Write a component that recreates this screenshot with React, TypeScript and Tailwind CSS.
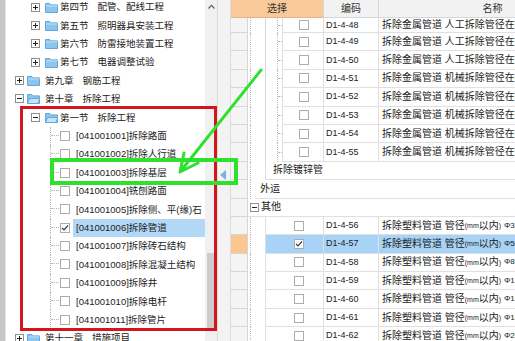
import React from "react";

type Node = { k: "n1" | "n2" | "leaf"; box?: "plus" | "minus"; a: string; b?: string; on?: boolean };

const tree: Node[] = [
  { k: "n2", box: "plus", a: "第四节", b: "配管、配线工程" },
  { k: "n2", box: "plus", a: "第五节", b: "照明器具安装工程" },
  { k: "n2", box: "plus", a: "第六节", b: "防雷接地装置工程" },
  { k: "n2", box: "plus", a: "第七节", b: "电器调整试验" },
  { k: "n1", box: "plus", a: "第九章", b: "钢筋工程" },
  { k: "n1", box: "minus", a: "第十章", b: "拆除工程" },
  { k: "n2", box: "minus", a: "第一节", b: "拆除工程" },
  { k: "leaf", a: "[041001001]拆除路面" },
  { k: "leaf", a: "[041001002]拆除人行道" },
  { k: "leaf", a: "[041001003]拆除基层" },
  { k: "leaf", a: "[041001004]铣刨路面" },
  { k: "leaf", a: "[041001005]拆除侧、平(缘)石" },
  { k: "leaf", a: "[041001006]拆除管道", on: true },
  { k: "leaf", a: "[041001007]拆除砖石结构" },
  { k: "leaf", a: "[041001008]拆除混凝土结构" },
  { k: "leaf", a: "[041001009]拆除井" },
  { k: "leaf", a: "[041001010]拆除电杆" },
  { k: "leaf", a: "[041001011]拆除管片" },
  { k: "n1", box: "plus", a: "第十一章", b: "措施项目" },
];

const metal = [
  { code: "D1-4-48", kind: "人工" },
  { code: "D1-4-49", kind: "人工" },
  { code: "D1-4-50", kind: "人工" },
  { code: "D1-4-51", kind: "机械" },
  { code: "D1-4-52", kind: "机械" },
  { code: "D1-4-53", kind: "机械" },
  { code: "D1-4-54", kind: "机械" },
  { code: "D1-4-55", kind: "机械" },
];

const plastic = [
  { code: "D1-4-56", d: "32" },
  { code: "D1-4-57", d: "50", on: true },
  { code: "D1-4-58", d: "80" },
  { code: "D1-4-59", d: "100" },
  { code: "D1-4-60", d: "150" },
  { code: "D1-4-61", d: "160" },
  { code: "D1-4-62", d: "200" },
];

function PlusBox({ minus }: { minus?: boolean }) {
  return (
    <svg width="9" height="9" viewBox="0 0 9 9" className="shrink-0">
      <rect x="0.5" y="0.5" width="8" height="8" fill="#fff" stroke="#8e8f8f" />
      <path d="M2 4.5h5" stroke="#1f1f1f" />
      {!minus && <path d="M4.5 2v5" stroke="#1f1f1f" />}
    </svg>
  );
}

function Folder({ open }: { open?: boolean }) {
  return (
    <svg width="13" height="11" viewBox="0 0 13 11" className="shrink-0">
      <path d="M0.5 1.5h4.2l1.2 1.4h6.6v7.6H0.5z" fill="#8cc6f0" stroke="#64a6dc" />
      {open ? (
        <path d="M0.5 10.5l2-5h10.3l-1.8 5z" fill="#c8e4f9" stroke="#64a6dc" />
      ) : (
        <path d="M1 4h11.5" stroke="#bfe0f8" />
      )}
    </svg>
  );
}

function Check({ on }: { on?: boolean }) {
  return (
    <span className="w-[10px] h-[10px] shrink-0 border border-[#acacac] bg-white flex items-center justify-center">
      {on && (
        <svg width="8" height="8" viewBox="0 0 8 8">
          <path d="M1 4l2 2 4-4.5" fill="none" stroke="#3c3c3c" strokeWidth="1.2" />
        </svg>
      )}
    </span>
  );
}

function TreeRow({ n }: { n: Node }) {
  if (n.k === "leaf") {
    return (
      <div className="flex items-center h-[18.4px] pl-[44px]">
        <div className="w-[9px] h-full border-l border-dotted border-[#b5b5b5] flex flex-col shrink-0">
          <div className="h-1/2 border-b border-dotted border-[#b5b5b5]" />
        </div>
        <div className="ml-[1px]">
          <Check on={n.on} />
        </div>
        <div className={`ml-[3px] h-full flex-1 flex items-center pl-[3px] whitespace-nowrap ${n.on ? "bg-[#b3d8f6]" : ""}`}>
          {n.a}
        </div>
      </div>
    );
  }
  const lvl1 = n.k === "n1";
  return (
    <div className={`flex items-center h-[18.4px] whitespace-nowrap ${lvl1 ? "pl-[9px]" : "pl-[25px]"}`}>
      <PlusBox minus={n.box === "minus"} />
      <div className={lvl1 ? "ml-[3px]" : "ml-[5px]"}>
        <Folder open={n.box === "minus"} />
      </div>
      <span className={lvl1 ? "ml-[5px]" : "ml-[2px]"}>{n.a}</span>
      <span className="ml-[9px]">{n.b}</span>
    </div>
  );
}

function Ind({ sel }: { sel?: boolean }) {
  return <div className={`w-[17px] shrink-0 border-r border-b border-[#d6d6d6] ${sel ? "bg-[#fbc78e]" : "bg-[#f4f4f4]"}`} />;
}

function CodeCell({ code }: { code: string }) {
  return (
    <div className="w-[55px] shrink-0 border-l border-b border-[#e0e0e0] flex items-center pl-[2px] text-[9px] text-[#222]">
      {code}
    </div>
  );
}

function NameCell({ children }: { children: React.ReactNode }) {
  return (
    <div className="w-[228px] shrink-0 border-l border-b border-[#e0e0e0] flex items-center pl-[3px] whitespace-nowrap">
      {children}
    </div>
  );
}

export default function App() {
  return (
    <div className="relative w-[515px] h-[341px] overflow-hidden bg-white text-[#1b1b1b] font-['Liberation_Sans','Noto_Sans_CJK_SC',sans-serif]">
      <div className="flex h-full">
        {/* left tree */}
        <div className="w-[6px] shrink-0 bg-[#c6c6c6] border-r border-[#e4e4e4]" />
        <div className="w-[199px] shrink-0 overflow-hidden text-[9.5px] leading-none">
          <div className="mt-[-2.2px]">
            {tree.map((n, i) => (
              <TreeRow key={i} n={n} />
            ))}
          </div>
        </div>
        <div className="w-[12px] shrink-0 bg-[#f0f0f0] flex flex-col">
          <div className="h-[12px] flex items-center justify-center">
            <svg width="7" height="5" viewBox="0 0 7 5">
              <path d="M0.5 4.5l3-3.2 3 3.2" fill="none" stroke="#606060" strokeWidth="1.2" />
            </svg>
          </div>
          <div className="mt-[241px] h-[77px] w-[8px] mx-auto bg-[#cdcdcd]" />
        </div>

        {/* splitter */}
        <div className="w-[14px] shrink-0 bg-[#f3f3f3] border-l border-[#cdcdcd] border-r border-[#dcdcdc] flex flex-col pl-[2px] pt-[170px]">
          <svg width="6" height="10" viewBox="0 0 6 10">
            <path d="M6 0v10L0 5z" fill="#7cb0e2" />
          </svg>
        </div>

        {/* right grid */}
        <div className="w-[284px] shrink-0 overflow-hidden flex flex-col text-[10px] leading-none">
          <div className="flex h-[18px] shrink-0 text-[#333]">
            <div className="w-[92px] shrink-0 bg-[#f9c999] flex items-center justify-center border-b border-[#e0b78a]">选择</div>
            <div className="w-[55px] shrink-0 bg-[#f2f2f2] border-l border-b border-[#d6d6d6] flex items-center justify-center">编码</div>
            <div className="w-[228px] shrink-0 bg-[#f2f2f2] border-l border-b border-[#d6d6d6] flex items-center justify-center">名称</div>
          </div>

          {metal.map((r, i) => (
            <div key={r.code} className={`flex shrink-0 ${i === 0 ? "h-[15px]" : "h-[18.4px]"}`}>
              <Ind />
              <div className="w-[34px] shrink-0 flex">
                <div className="w-[2px]" />
                <div className="w-[15px] border-l border-dotted border-[#b9b9b9]" />
                <div className="w-[12px] border-l border-[#d6d6d6]" />
                <div className="w-[5px] border-l border-dotted border-[#b9b9b9] flex flex-col">
                  <div className="h-1/2 border-b border-dotted border-[#b9b9b9]" />
                </div>
              </div>
              <div className="w-[41px] shrink-0 border-l border-b border-[#e0e0e0] flex items-center pl-[16px]">
                <Check />
              </div>
              <CodeCell code={r.code} />
              <NameCell>
                拆除金属管道{"\u00a0"}
                {r.kind}拆除管径在(mm以内)
              </NameCell>
            </div>
          ))}

          <div className="flex h-[18.4px] shrink-0">
            <Ind />
            <div className="w-[17px] shrink-0 flex">
              <div className="w-[2px]" />
              <div className="flex-1 border-l border-dotted border-[#b9b9b9]" />
            </div>
            <div className="w-[400px] shrink-0 border-l border-b border-[#e0e0e0] flex items-center pl-[7px]">拆除镀锌管</div>
          </div>
          <div className="flex h-[18.4px] shrink-0">
            <Ind />
            <div className="w-[7px] shrink-0 flex">
              <div className="w-[2px]" />
              <div className="flex-1 border-l border-dotted border-[#b9b9b9]" />
            </div>
            <div className="w-[400px] shrink-0 border-b border-[#e0e0e0] flex items-center pl-[5px]">外运</div>
          </div>
          <div className="flex h-[18.4px] shrink-0">
            <Ind />
            <div className="w-[400px] shrink-0 border-b border-[#e0e0e0] flex items-center pl-[2px]">
              <PlusBox minus />
              <span className="ml-[2px]">其他</span>
            </div>
          </div>

          {plastic.map((r) => (
            <div key={r.code} className="flex h-[18.4px] shrink-0">
              <Ind sel={r.on} />
              <div className="w-[17px] shrink-0 flex">
                <div className="w-[2px]" />
                <div className="flex-1 border-l border-dotted border-[#b9b9b9]" />
              </div>
              <div className={`w-[400px] shrink-0 flex ${r.on ? "bg-[#a9d3f6]" : ""}`}>
                <div className="w-[58px] shrink-0 border-l border-b border-[#e0e0e0] flex items-center pl-[28px]">
                  <Check on={r.on} />
                </div>
                <CodeCell code={r.code} />
                <NameCell>
                  拆除塑料管道{"\u00a0"}管径<span className="text-[7px]">(mm</span>以内<span className="text-[7px]">)</span>
                  {"\u00a0"}
                  <span className="text-[8px]">Φ{r.d}</span>
                </NameCell>
              </div>
            </div>
          ))}
        </div>
      </div>

      {/* annotations */}
      <div className="absolute left-[20px] top-[106px] w-[197px] h-[225px] border-[3px] border-[#d2161c]" />
      <div className="absolute left-[50px] top-[158px] w-[188px] h-[27px] border-[4px] border-[#2fe02f]" />
      <svg className="absolute left-0 top-0 pointer-events-none" width="515" height="341" viewBox="0 0 515 341">
        <path d="M261 70L180 172M180 172L198 163M180 172L184 153" fill="none" stroke="#2fe02f" strokeWidth="3" strokeLinecap="round" />
      </svg>
    </div>
  );
}
